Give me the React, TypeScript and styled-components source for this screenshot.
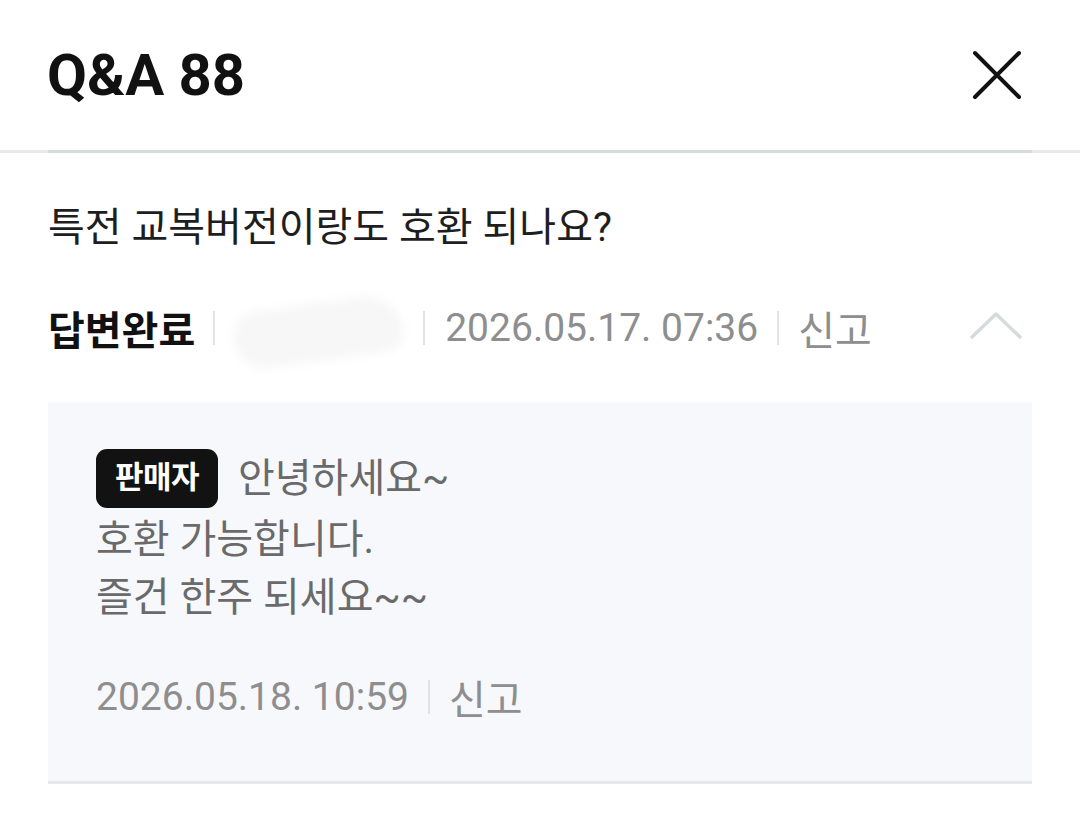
import React from "react";
import styled, { createGlobalStyle } from "styled-components";

const GlobalStyle = createGlobalStyle`
  body {
    margin: 0;
    background: #ffffff;
    font-family: Roboto, "Noto Sans CJK KR", sans-serif;
  }
`;

const Page = styled.div`
  width: 1080px;
  background: #ffffff;
`;

const Header = styled.header`
  display: flex;
  justify-content: space-between;
  align-items: center;
  height: 150px;
  padding: 0 58px 0 47px;
  box-sizing: border-box;
  h1 {
    margin: 0;
    font-size: 58px;
    font-weight: 700;
    color: #111111;
  }
`;

const IconButton = styled.button`
  display: flex;
  align-items: center;
  justify-content: center;
  width: 50px;
  height: 50px;
  padding: 0;
  border: none;
  background: none;
`;

const HeaderRule = styled.div`
  height: 3px;
  background: linear-gradient(
    to right,
    #e9e9e9 48px,
    #d6dbdb 48px,
    #d6dbdb calc(100% - 48px),
    #e9e9e9 calc(100% - 48px)
  );
`;

const Content = styled.section`
  padding: 0 48px;
`;

const Question = styled.p`
  margin: 50px 0 0;
  font-size: 40px;
  line-height: 50px;
  color: #1e1e1e;
`;

const MetaRow = styled.div`
  display: flex;
  align-items: center;
  height: 50px;
  margin-top: 50px;
  font-size: 39px;
  color: #8e8e8e;
  .status {
    font-size: 40px;
    font-weight: 700;
    color: #111111;
  }
  .report {
    font-size: 40px;
  }
  .toggle {
    margin-left: auto;
    margin-right: 10px;
  }
`;

const Sep = styled.span<{ $gap?: number }>`
  display: inline-block;
  width: 2px;
  height: 34px;
  background: #e2e2e2;
  margin: 0 ${(p) => p.$gap ?? 20}px;
`;

const Masked = styled.span`
  display: inline-block;
  width: 170px;
  height: 58px;
  margin-top: 8px;
  background: #f7f7f7;
  border-radius: 40px 60px 30px 50px;
  transform: rotate(-8deg);
  filter: blur(5px);
`;

const AnswerBox = styled.div`
  margin-top: 49px;
  padding: 48px 48px 59px;
  background: #f7f8fb;
  border-bottom: 3px solid #e6e8eb;
`;

const Body = styled.div`
  font-size: 40px;
  line-height: 58px;
  color: #6a6a6a;
`;

const Badge = styled.span`
  display: inline-flex;
  align-items: center;
  justify-content: center;
  width: 122px;
  height: 59px;
  margin-right: 20px;
  vertical-align: middle;
  position: relative;
  top: -3px;
  border-radius: 11px;
  background: #121212;
  color: #ffffff;
  font-size: 31px;
  font-weight: 700;
  letter-spacing: -0.5px;
`;

const Footer = styled.div`
  display: flex;
  align-items: center;
  height: 50px;
  margin-top: 45px;
  font-size: 39px;
  color: #8e8e8e;
  .report {
    font-size: 40px;
  }
`;

const CloseIcon = () => (
  <svg width="50" height="50" viewBox="0 0 50 50" fill="none">
    <path
      d="M3 3L47 47M47 3L3 47"
      stroke="#111111"
      strokeWidth="4"
      strokeLinecap="round"
    />
  </svg>
);

const ChevronUp = () => (
  <svg width="52" height="30" viewBox="0 0 52 30" fill="none">
    <path
      d="M2 26L26 3L50 26"
      stroke="#d5dadd"
      strokeWidth="3.5"
      strokeLinecap="round"
      strokeLinejoin="round"
    />
  </svg>
);

const App = () => {
  return (
    <Page>
      <GlobalStyle />
      <Header>
        <h1>Q&amp;A 88</h1>
        <IconButton aria-label="닫기">
          <CloseIcon />
        </IconButton>
      </Header>
      <HeaderRule />
      <Content>
        <Question>특전 교복버전이랑도 호환 되나요?</Question>
        <MetaRow>
          <span className="status">답변완료</span>
          <Sep $gap={18} />
          <Masked />
          <Sep $gap={20} />
          <span>2026.05.17. 07:36</span>
          <Sep $gap={19} />
          <span className="report">신고</span>
          <span className="toggle">
            <ChevronUp />
          </span>
        </MetaRow>
        <AnswerBox>
          <Body>
            <Badge>판매자</Badge>안녕하세요~
            <br />
            호환 가능합니다.
            <br />
            즐건 한주 되세요~~
          </Body>
          <Footer>
            <span>2026.05.18. 10:59</span>
            <Sep $gap={19} />
            <span className="report">신고</span>
          </Footer>
        </AnswerBox>
      </Content>
    </Page>
  );
};

export default App;
